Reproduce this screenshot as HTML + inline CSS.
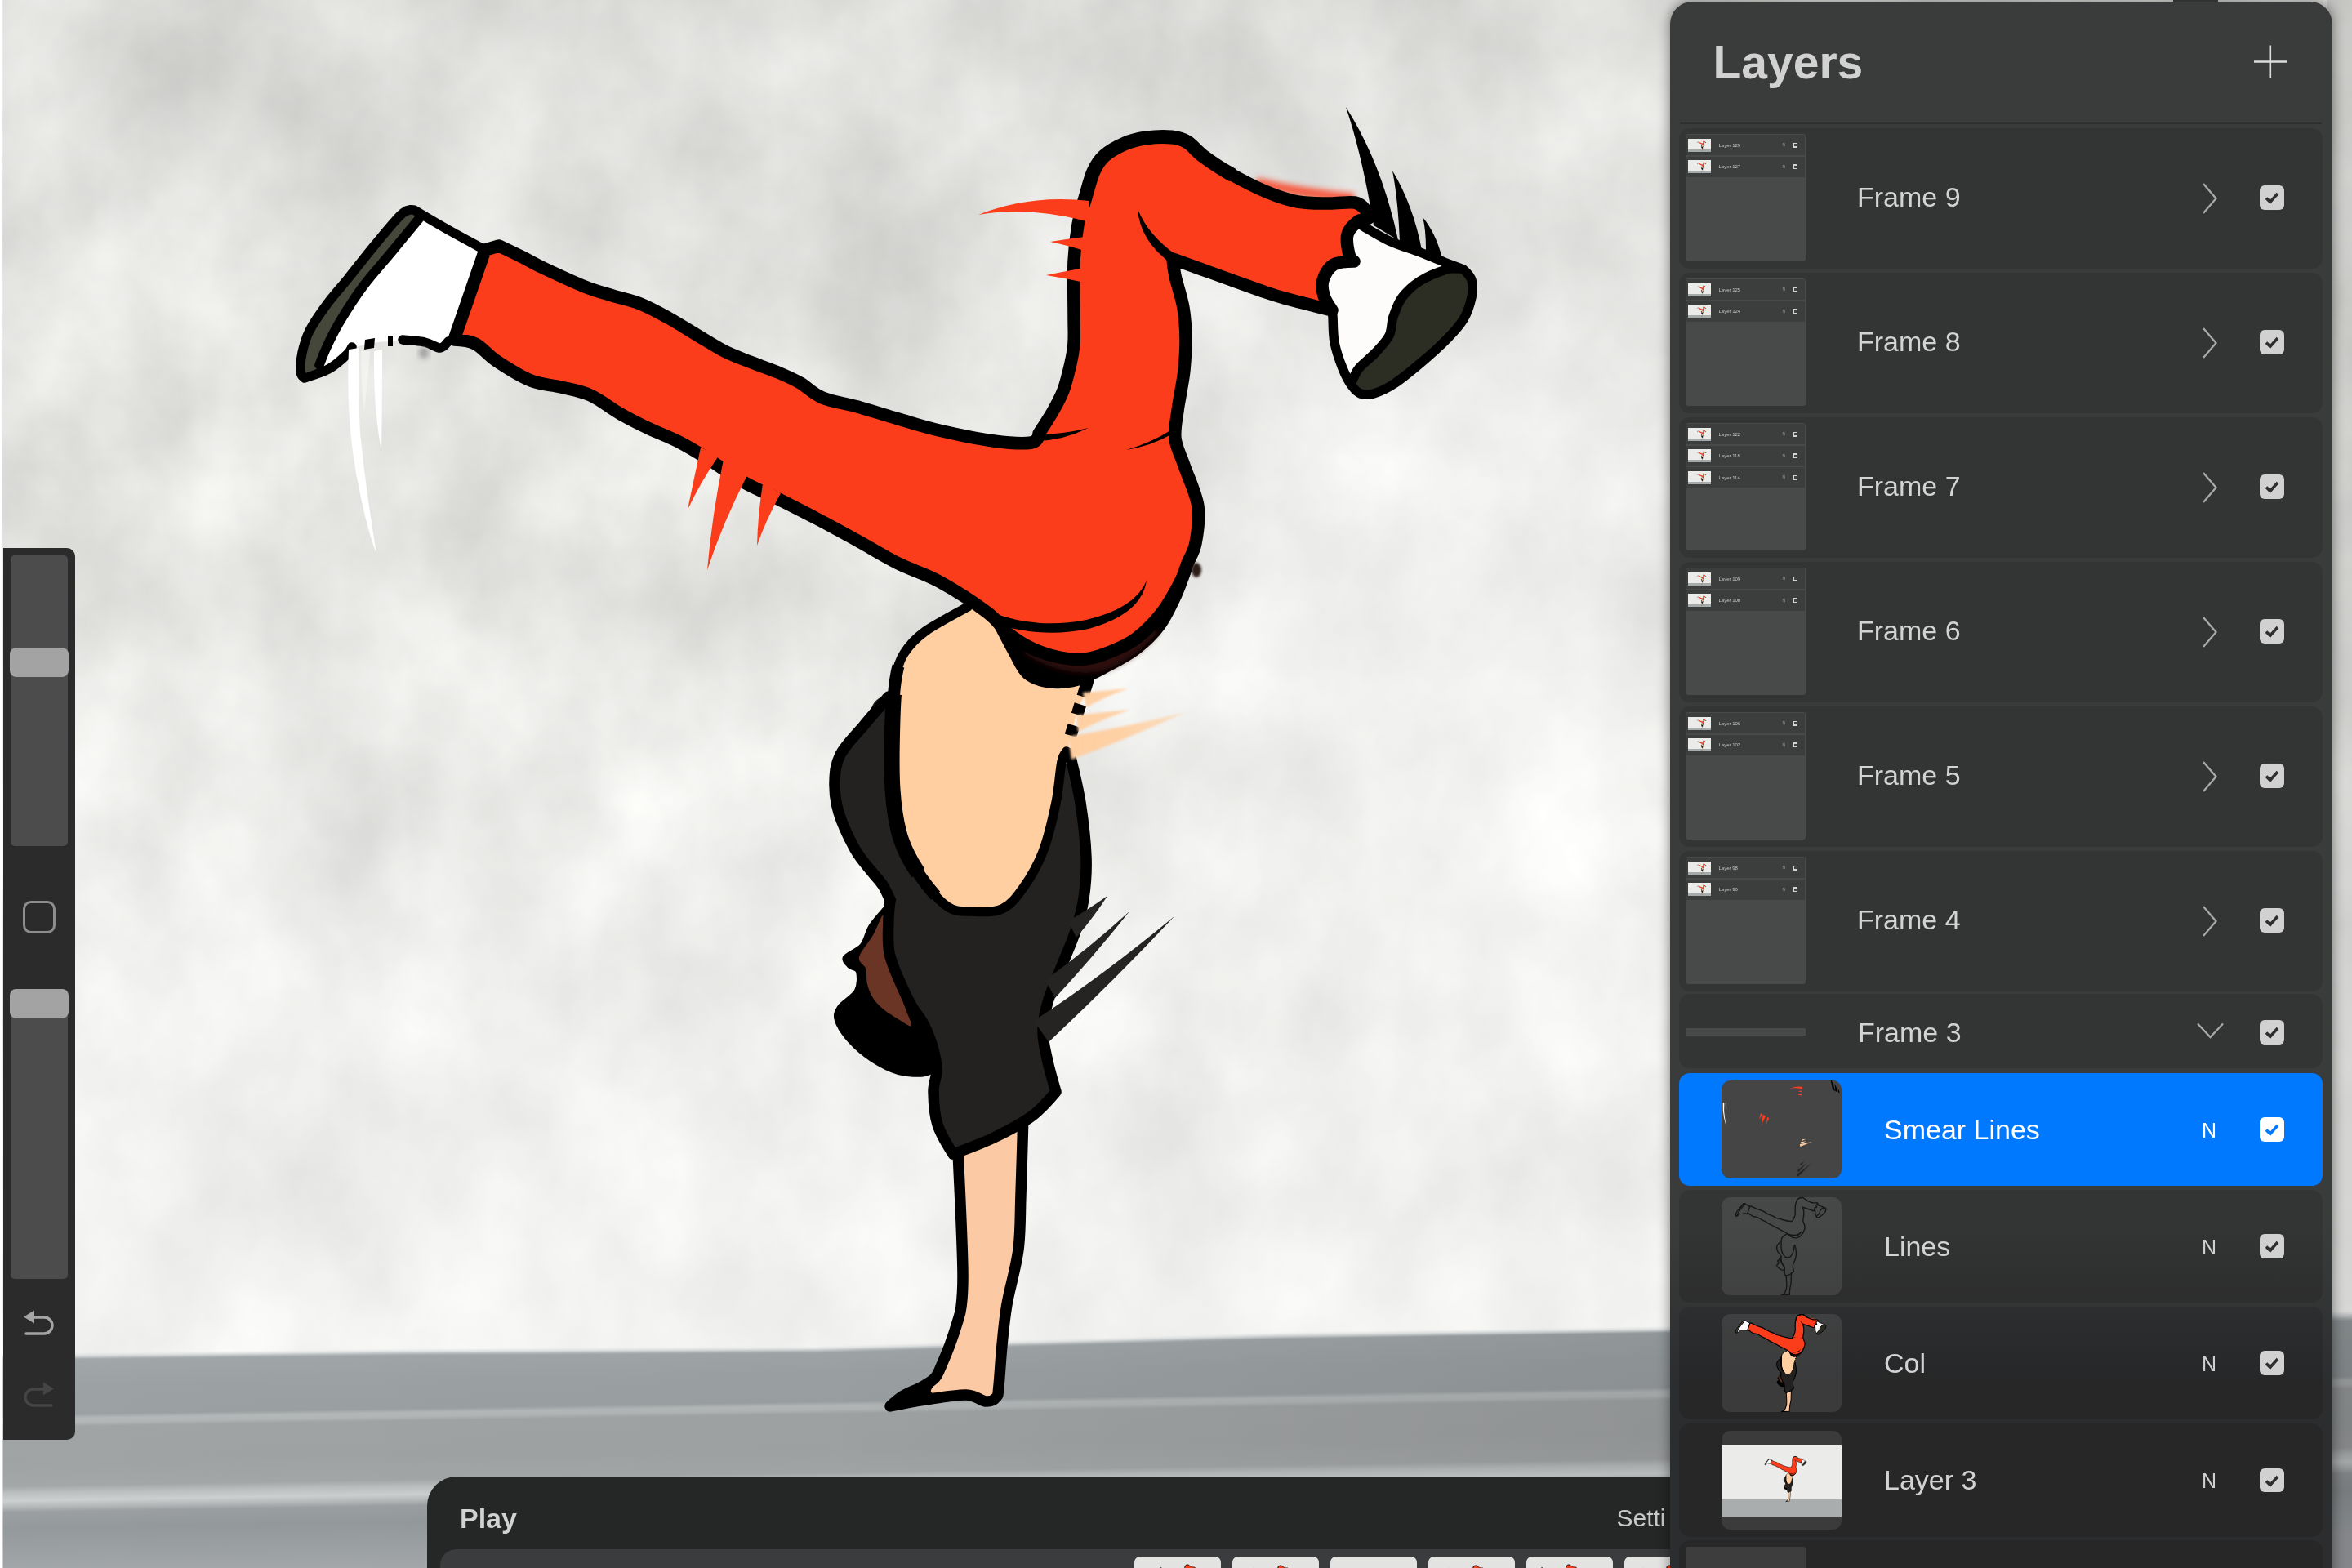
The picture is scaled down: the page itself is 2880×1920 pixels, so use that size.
<!DOCTYPE html><html><head><meta charset="utf-8"><title>Layers</title><style>
html,body{margin:0;padding:0;background:#fff}
body{width:2880px;height:1920px;overflow:hidden;position:relative;font-family:"Liberation Sans",sans-serif}
.abs{position:absolute}
svg{position:absolute;left:0;top:0;overflow:visible}
#side{left:3.5px;top:671px;width:88px;height:1092px;background:#2b2b2b;border-radius:0 10px 10px 0}
.trk{left:9px;width:70px;background:#4d4c4c;border-radius:5px}
.hnd{left:8px;width:72px;height:36px;background:#a3a3a3;border-radius:8px}
#tl{will-change:transform;left:523px;top:1808px;width:1560px;height:140px;background:#252727;border-radius:36px 0 0 0;overflow:hidden}
#tl .play{left:40px;top:31px;font-size:34px;font-weight:bold;color:#d2d2d2;line-height:40px}
#tl .set{left:1456.5px;top:33px;font-size:30px;color:#c9c9c9;line-height:36px;white-space:nowrap}
#tl .strip{left:16px;top:88.5px;width:1600px;height:80px;background:#3b3c3e;border-radius:20px 0 0 0}
#tl .ft{top:98px;width:105.5px;height:60px;background:#e3e3e2;border-radius:7px 7px 0 0;overflow:hidden}
#lay{left:2044.5px;top:1.5px;width:810.5px;height:1960px;background:linear-gradient(#3a3b3b 0,#3a3b3b 1500px,#2c2d2e 1690px);border-radius:27px;box-shadow:0 0 14px 2px rgba(0,0,0,.38);will-change:transform}
#lay .ttl{left:52.5px;top:42px;font-size:57px;font-weight:bold;color:#d1d1d1;line-height:64px}
.row{left:11px;width:787.5px;background:rgba(0,0,0,.115);border-radius:13px}
.row.sel{background:#0079ff}
.gth{left:7.5px;top:7.5px;width:147.5px;height:155.5px;background:rgba(255,255,255,.105);overflow:hidden;border-radius:3px}
.mr{left:1px;width:145.5px;height:25px;background:rgba(0,0,0,.16)}
.mt{left:2.5px;top:4.5px;width:27.5px;height:13px;background:#ebebea;border-bottom:3.5px solid #a5aaab}
.ml{left:40px;top:8.5px;font-size:6px;line-height:8px;color:#c4c4c4;white-space:nowrap}
.mn{left:118px;top:9px;font-size:5px;line-height:7px;color:#9a9a9a}
.mc{left:130.5px;top:9.5px;width:6px;height:6px;background:#d4d4d4;border-radius:1px}
.mc:after{content:"";position:absolute;left:1.5px;top:1.5px;width:3px;height:3px;background:#444}
.nm{font-size:34px;line-height:40px;color:#d3d3d3;white-space:nowrap}
.row.sel .nm{color:#fff}
.cb{left:711px;width:29.5px;height:29.5px;background:#d1d1d1;border-radius:6px}
.row.sel .cb{background:#fff}
.row.sel .th{background:#454545}
.th{left:52px;top:9px;width:147px;height:120.5px;background:rgba(255,255,255,.095);border-radius:11px;overflow:hidden}
.n{left:640px;font-size:25px;line-height:30px;color:#d0d0d0}
.row.sel .n{color:#fff}
</style></head><body>
<svg width="2880" height="1920" viewBox="0 0 2880 1920">
<defs>
<filter id="wallTex" x="0" y="0" width="100%" height="100%" filterUnits="objectBoundingBox" color-interpolation-filters="sRGB">
<feTurbulence type="fractalNoise" baseFrequency="0.006 0.0045" numOctaves="5" seed="11" result="n"/>
<feColorMatrix type="matrix" values="0.2 0 0 0 0.815  0.2 0 0 0 0.815  0.2 0 0 0 0.805  0 0 0 0 1"/>
</filter>
<filter id="soft" x="-20%" y="-20%" width="140%" height="140%"><feGaussianBlur stdDeviation="1.6"/></filter>
<filter id="soft2" x="-20%" y="-50%" width="140%" height="200%"><feGaussianBlur stdDeviation="3.5"/></filter>
<filter id="soft3" filterUnits="userSpaceOnUse" x="1500" y="190" width="200" height="80"><feGaussianBlur stdDeviation="3.5"/></filter>
<linearGradient id="skinFade" gradientUnits="userSpaceOnUse" x1="1310" y1="0" x2="1450" y2="0"><stop offset="0" stop-color="#ffcfa1"/><stop offset="0.45" stop-color="#ffcfa1" stop-opacity=".95"/><stop offset="1" stop-color="#ffcfa1" stop-opacity=".55"/></linearGradient>
<linearGradient id="floorG" gradientUnits="userSpaceOnUse" x1="0" y1="1650" x2="0" y2="1950" gradientTransform="skewY(-0.95)"><stop offset="0.0133" stop-color="#eceeed"/><stop offset="0.0333" stop-color="#cfd3d3"/><stop offset="0.0500" stop-color="#a1a7a9"/><stop offset="0.1667" stop-color="#9ca2a4"/><stop offset="0.2767" stop-color="#9ba0a2"/><stop offset="0.2933" stop-color="#b4b8b9"/><stop offset="0.3100" stop-color="#b2b6b7"/><stop offset="0.3267" stop-color="#a1a4a5"/><stop offset="0.4667" stop-color="#a0a3a4"/><stop offset="0.5667" stop-color="#a4a7a8"/><stop offset="0.5933" stop-color="#bbbebe"/><stop offset="0.6267" stop-color="#cdd0d0"/><stop offset="0.6533" stop-color="#b4b7b8"/><stop offset="0.6733" stop-color="#9b9fa1"/><stop offset="0.7400" stop-color="#94999b"/><stop offset="0.9167" stop-color="#a3a7aa"/></linearGradient><linearGradient id="floorD" gradientUnits="userSpaceOnUse" x1="0" y1="0" x2="2880" y2="0"><stop offset="0" stop-color="#000" stop-opacity="0"/><stop offset="0.35" stop-color="#000" stop-opacity="0.02"/><stop offset="0.7" stop-color="#000" stop-opacity="0.1"/><stop offset="1" stop-color="#000" stop-opacity="0.1"/></linearGradient><linearGradient id="wallV" gradientUnits="userSpaceOnUse" x1="0" y1="0" x2="0" y2="1660"><stop offset="0" stop-color="#000" stop-opacity="0.06"/><stop offset="0.2" stop-color="#000" stop-opacity="0.04"/><stop offset="0.36" stop-color="#000" stop-opacity="0"/><stop offset="0.5" stop-color="#fff" stop-opacity="0.12"/><stop offset="1" stop-color="#fff" stop-opacity="0.45"/></linearGradient><radialGradient id="wallR" gradientUnits="userSpaceOnUse" cx="1780" cy="700" r="700"><stop offset="0" stop-color="#fff" stop-opacity="0.4"/><stop offset="1" stop-color="#fff" stop-opacity="0"/></radialGradient>
<path id="pPants" d="M611,301C611,301 631,310.5 640,315C649,319.5 652.3,322 665,328C677.7,334 701.8,345.3 716,351C730.2,356.7 738.7,358.5 750,362C761.3,365.5 772.7,367.5 784,372C795.3,376.5 806.5,382.7 818,389C829.5,395.3 841.5,403.2 853,410C864.5,416.8 875.7,424.3 887,430C898.3,435.7 909.7,439.5 921,444C932.3,448.5 945.2,452.8 955,457C964.8,461.2 971.3,464 980,469C988.7,474 995.3,482.2 1007,487C1018.7,491.8 1034.5,493.7 1050,498C1065.5,502.3 1083.3,508.2 1100,513C1116.7,517.8 1130.5,522.5 1150,527C1169.5,531.5 1198.2,537.5 1217,540C1235.8,542.5 1253.8,543.5 1263,542C1272.2,540.5 1272,531 1272,531C1272,531 1284,512.8 1289,504C1294,495.2 1298.3,487.8 1302,478C1305.7,468.2 1308.8,454.7 1311,445C1313.2,435.3 1314.3,429.7 1315,420C1315.7,410.3 1315,403.7 1315,387C1315,370.3 1314.2,338.7 1315,320C1315.8,301.3 1317.7,288 1320,275C1322.3,262 1325.8,252.8 1329,242C1332.2,231.2 1335.2,218.5 1339,210C1342.8,201.5 1345.7,196.7 1352,191C1358.3,185.3 1368.5,179.7 1377,176C1385.5,172.3 1393.3,170.3 1403,169C1412.7,167.7 1426.5,167.2 1435,168C1443.5,168.8 1447.7,170.2 1454,174C1460.3,177.8 1464.5,184.7 1473,191C1481.5,197.3 1492,204.7 1505,212C1518,219.3 1537,229.2 1551,235C1565,240.8 1576.3,244.7 1589,247C1601.7,249.3 1615.3,248.8 1627,249C1638.7,249.2 1651.5,246.7 1659,248C1666.5,249.3 1669.2,253.8 1672,257C1674.8,260.2 1677.5,264.7 1676,267C1674.5,269.3 1667.3,267.7 1663,271C1658.7,274.3 1651.8,280.2 1650,287C1648.2,293.8 1650.7,306.5 1652,312C1653.3,317.5 1658,320 1658,320C1658,320 1639.3,320.2 1633,324C1626.7,327.8 1622,336.7 1620,343C1618,349.3 1619.2,355.8 1621,362C1622.8,368.2 1631,380 1631,380C1631,380 1593.5,370.7 1580,367C1566.5,363.3 1566.2,363.5 1550,358C1533.8,352.5 1502,340.8 1483,334C1464,327.2 1436,317 1436,317C1436,317 1436.8,328 1439,338C1441.2,348 1446.8,364.2 1449,377C1451.2,389.8 1451.8,402.3 1452,415C1452.2,427.7 1451,442.3 1450,453C1449,463.7 1447.3,470.7 1446,479C1444.7,487.3 1443.2,493.3 1442,503C1440.8,512.7 1437.7,525.8 1439,537C1440.3,548.2 1445.3,556.2 1450,570C1454.7,583.8 1464.7,604.2 1467,620C1469.3,635.8 1466.2,653.3 1464,665C1461.8,676.7 1457.2,682 1454,690C1450.8,698 1450.3,702.8 1445,713C1439.7,723.2 1431,739.5 1422,751C1413,762.5 1401.3,774.2 1391,782C1380.7,789.8 1370.3,793.8 1360,798C1349.7,802.2 1339.3,805.8 1329,807C1318.7,808.2 1308.5,807 1298,805C1287.5,803 1276.5,799.8 1266,795C1255.5,790.2 1244.5,783.5 1235,776C1225.5,768.5 1223.2,760.7 1209,750C1194.8,739.3 1168.2,722 1150,712C1131.8,702 1116.7,698.3 1100,690C1083.3,681.7 1066.7,671.2 1050,662C1033.3,652.8 1016.2,643.5 1000,635C983.8,626.5 968,618.5 953,611C938,603.5 924.3,598.2 910,590C895.7,581.8 879.8,570 867,562C854.2,554 845.3,548.3 833,542C820.7,535.7 805.2,529.8 793,524C780.8,518.2 771.7,513.7 760,507C748.3,500.3 735.2,489.5 723,484C710.8,478.5 699.2,477 687,474C674.8,471 663.2,471.3 650,466C636.8,460.7 619.3,449.5 608,442C596.7,434.5 590.7,425.3 582,421C573.3,416.7 556,416 556,416C556,416 594,306 594,306C594,306 611,301 611,301Z"/>
<path id="pBand" d="M1464,680C1463.2,682.5 1462.2,686.3 1459,695C1455.8,703.7 1450.7,719.7 1445,732C1439.3,744.3 1433.3,757.8 1425,769C1416.7,780.2 1406.2,790.3 1395,799C1383.8,807.7 1370.3,814.5 1358,821C1345.7,827.5 1333.3,834.7 1321,838C1308.7,841.3 1295.2,842.5 1284,841C1272.8,839.5 1262,835.8 1254,829C1246,822.2 1242.5,811.5 1236,800C1229.5,788.5 1218.5,766.7 1215,760L1239,772C1244,775 1259,785.3 1269,790C1279,794.7 1289,798 1299,800C1309,802 1319.2,803.2 1329,802C1338.8,800.8 1348.2,797.2 1358,793C1367.8,788.8 1378,784.7 1388,777C1398,769.3 1409.3,758.2 1418,747C1426.7,735.8 1434.8,721.2 1440,710C1445.2,698.8 1447.5,685 1449,680Z"/>
<path id="pLsW" d="M513,268L548,281L592,305L554,409L549,418L539,426L520,419L493,416L453,420L429,427L404,451L391,447L400,425L416,394L445,350L480,308Z"/>
<path id="pLsS" d="M507,258C503.5,257 500,255 492,262C484,269 469.8,287 459,300C448.2,313 436.8,327.8 427,340C417.2,352.2 408,362.2 400,373C392,383.8 384,395.2 379,405C374,414.8 371.7,423.7 370,432C368.3,440.3 368.5,450 369,455C369.5,460 370.3,461.5 373,462C375.7,462.5 381.7,461 385,458C388.3,455 390.5,449.5 393,444C395.5,438.5 396.2,433.3 400,425C403.8,416.7 408.5,406.5 416,394C423.5,381.5 434.3,364.3 445,350C455.7,335.7 468.7,321.7 480,308C491.3,294.3 508.5,276.3 513,268C517.5,259.7 510.5,259 507,258Z"/>
<path id="pLsO" d="M592,305C584.7,301 562.2,289 548,281C533.8,273 507,257 507,257C507,257 500,254.8 492,262C484,269.2 469.8,287 459,300C448.2,313 436.8,327.8 427,340C417.2,352.2 408,362.2 400,373C392,383.8 384,395.2 379,405C374,414.8 371.8,423.7 370,432C368.2,440.3 367.5,449.8 368,455C368.5,460.2 373,463 373,463C373,463 376.8,462 382,460C387.2,458 396.8,455.3 404,451C411.2,446.7 420.5,438.3 425,434C429.5,429.7 430,426.5 431,425"/>
<path id="pLsI" d="M513,268C507.5,274.7 491.3,294.3 480,308C468.7,321.7 455.7,335.7 445,350C434.3,364.3 423.5,381.5 416,394C408.5,406.5 404.2,416.2 400,425C395.8,433.8 392.5,443.3 391,447"/>
<path id="pLsB" d="M493,416C497.5,416.5 512.3,417.3 520,419C527.7,420.7 534.2,426.2 539,426C543.8,425.8 547.3,419.3 549,418"/>
<path id="pRsW" d="M1663,270C1666.2,268.3 1662.7,272.8 1669,277C1675.3,281.2 1689.3,289.7 1701,295C1712.7,300.3 1727.3,304.5 1739,309C1750.7,313.5 1762.2,318.5 1771,322C1779.8,325.5 1792,328.7 1792,330C1792,331.3 1779.8,327.7 1771,330C1762.2,332.3 1748,338.3 1739,344C1730,349.7 1722.5,356.7 1717,364C1711.5,371.3 1708.7,380.2 1706,388C1703.3,395.8 1704.7,403.7 1701,411C1697.3,418.3 1690.2,425.3 1684,432C1677.8,438.7 1668.7,445.3 1664,451C1659.3,456.7 1657.5,462.5 1656,466C1654.5,469.5 1657,474.5 1655,472C1653,469.5 1647.5,459.8 1644,451C1640.5,442.2 1636,429.5 1634,419C1632,408.5 1632.5,394.8 1632,388C1631.5,381.2 1632.8,382.3 1631,378C1629.2,373.7 1622.8,367.8 1621,362C1619.2,356.2 1618,349.3 1620,343C1622,336.7 1626.7,327.8 1633,324C1639.3,320.2 1654.8,322 1658,320C1661.2,318 1653.3,317.5 1652,312C1650.7,306.5 1648.2,294 1650,287C1651.8,280 1659.8,271.7 1663,270Z"/>
<path id="pRsS" d="M1792,330C1797.2,332.2 1800.3,337.3 1802,343C1803.7,348.7 1803.7,356 1802,364C1800.3,372 1797.2,382.3 1792,391C1786.8,399.7 1779.8,407 1771,416C1762.2,425 1749.7,436 1739,445C1728.3,454 1716.5,463.8 1707,470C1697.5,476.2 1688.8,480 1682,482C1675.2,484 1670.5,483.7 1666,482C1661.5,480.3 1656.7,474.7 1655,472C1653.3,469.3 1654.5,469.5 1656,466C1657.5,462.5 1659.3,456.7 1664,451C1668.7,445.3 1677.8,438.7 1684,432C1690.2,425.3 1697.3,418.3 1701,411C1704.7,403.7 1703.3,395.8 1706,388C1708.7,380.2 1711.5,371.3 1717,364C1722.5,356.7 1730,349.7 1739,344C1748,338.3 1762.2,332.3 1771,330C1779.8,327.7 1786.8,327.8 1792,330Z"/>
<path id="pRsO" d="M1669,277C1674.3,280 1689.3,289.7 1701,295C1712.7,300.3 1727.3,304.5 1739,309C1750.7,313.5 1762.2,318.5 1771,322C1779.8,325.5 1792,330 1792,330C1792,330 1800.3,337.3 1802,343C1803.7,348.7 1803.7,356 1802,364C1800.3,372 1797.2,382.3 1792,391C1786.8,399.7 1779.8,407 1771,416C1762.2,425 1749.7,436 1739,445C1728.3,454 1716.5,463.8 1707,470C1697.5,476.2 1688.8,480 1682,482C1675.2,484 1670.5,483.7 1666,482C1661.5,480.3 1658.7,477.2 1655,472C1651.3,466.8 1647.5,459.8 1644,451C1640.5,442.2 1636,429.5 1634,419C1632,408.5 1632.5,394.8 1632,388C1631.5,381.2 1631.2,379.7 1631,378"/>
<path id="pRsI" d="M1785,329C1782.7,329.2 1778.7,327.5 1771,330C1763.3,332.5 1748,338.3 1739,344C1730,349.7 1722.5,356.7 1717,364C1711.5,371.3 1708.7,380.2 1706,388C1703.3,395.8 1704.7,403.7 1701,411C1697.3,418.3 1690.2,425.3 1684,432C1677.8,438.7 1668.7,445.3 1664,451C1659.3,456.7 1657.3,463.5 1656,466"/>
<path id="pShirt" d="M1088,853C1064.3,851 1067.8,876.2 1058,888C1048.2,899.8 1035,912.3 1029,924C1023,935.7 1022.3,946.2 1022,958C1021.7,969.8 1022.8,981.3 1027,995C1031.2,1008.7 1040.2,1027.8 1047,1040C1053.8,1052.2 1062.3,1060.7 1068,1068C1073.7,1075.3 1077.3,1078.3 1081,1084C1084.7,1089.7 1089,1088.2 1090,1102C1091,1115.8 1084.7,1149.5 1087,1167C1089.3,1184.5 1099,1196 1104,1207C1109,1218 1112.5,1225.2 1117,1233C1121.5,1240.8 1126.8,1245.8 1131,1254C1135.2,1262.2 1139.3,1272.7 1142,1282C1144.7,1291.3 1146.8,1300.8 1147,1310C1147.2,1319.2 1142.8,1325.8 1143,1337C1143.2,1348.2 1144,1364.3 1148,1377C1152,1389.7 1167,1413 1167,1413C1167,1413 1201,1400.7 1217,1393C1233,1385.3 1250.3,1376.3 1263,1367C1275.7,1357.7 1293,1337 1293,1337C1293,1337 1285.7,1312.3 1283,1300C1280.3,1287.7 1277,1275.2 1277,1263C1277,1250.8 1279.2,1240.3 1283,1227C1286.8,1213.7 1294.3,1197.5 1300,1183C1305.7,1168.5 1312.5,1153.8 1317,1140C1321.5,1126.2 1324.8,1115 1327,1100C1329.2,1085 1330.7,1069.5 1330,1050C1329.3,1030.5 1326.3,1004.2 1323,983C1319.7,961.8 1310,923 1310,923C1310,923 1318.3,938.8 1300,935C1281.7,931.2 1235.3,913.7 1200,900C1164.7,886.3 1111.7,855 1088,853Z"/>
<path id="pSkin" d="M1185,743C1173.8,747.7 1146,763.5 1133,773C1120,782.5 1113,790.5 1107,800C1101,809.5 1099.3,816.7 1097,830C1094.7,843.3 1093.7,857.2 1093,880C1092.3,902.8 1091.3,942.5 1093,967C1094.7,991.5 1097.3,1009.3 1103,1027C1108.7,1044.7 1117.5,1059.2 1127,1073C1136.5,1086.8 1149.5,1102.8 1160,1110C1170.5,1117.2 1178.8,1115.5 1190,1116C1201.2,1116.5 1216.5,1117.8 1227,1113C1237.5,1108.2 1244.7,1098.7 1253,1087C1261.3,1075.3 1270.3,1060.3 1277,1043C1283.7,1025.7 1289.2,1001.3 1293,983C1296.8,964.7 1297.7,943.8 1300,933C1302.3,922.2 1303.7,928.8 1307,918C1310.3,907.2 1315.3,881.8 1320,868C1324.7,854.2 1338.3,839.7 1335,835C1331.7,830.3 1313.5,841 1300,840C1286.5,839 1268.2,842.3 1254,829C1239.8,815.7 1224,774 1215,760C1206,746 1205,747.8 1200,745C1195,742.2 1196.2,738.3 1185,743Z"/>
<path id="pTorsoL" d="M1185,743C1176.3,748 1146,763.5 1133,773C1120,782.5 1113,790.5 1107,800C1101,809.5 1099.3,816.7 1097,830C1094.7,843.3 1093.7,857.2 1093,880C1092.3,902.8 1091.3,942.5 1093,967C1094.7,991.5 1097.3,1009.3 1103,1027C1108.7,1044.7 1117.5,1059.2 1127,1073C1136.5,1086.8 1149.5,1102.8 1160,1110C1170.5,1117.2 1178.8,1115.5 1190,1116C1201.2,1116.5 1216.5,1117.8 1227,1113C1237.5,1108.2 1244.7,1098.7 1253,1087C1261.3,1075.3 1270.3,1060.3 1277,1043C1283.7,1025.7 1289.2,1001.3 1293,983C1296.8,964.7 1297.8,943.5 1300,933C1302.2,922.5 1305,922.2 1306,920"/>
<path id="pShirtL" d="M1088,853C1083,858.8 1067.8,876.2 1058,888C1048.2,899.8 1035,912.3 1029,924C1023,935.7 1022.3,946.2 1022,958C1021.7,969.8 1022.8,981.3 1027,995C1031.2,1008.7 1040.2,1027.8 1047,1040C1053.8,1052.2 1062.3,1060.7 1068,1068C1073.7,1075.3 1077.3,1078.3 1081,1084C1084.7,1089.7 1088.5,1099 1090,1102"/>
<path id="pShirtR" d="M1310,923C1312.2,933 1319.7,961.8 1323,983C1326.3,1004.2 1329.3,1030.5 1330,1050C1330.7,1069.5 1329.2,1085 1327,1100C1324.8,1115 1321.5,1126.2 1317,1140C1312.5,1153.8 1305.7,1168.5 1300,1183C1294.3,1197.5 1286.8,1213.7 1283,1227C1279.2,1240.3 1277,1250.8 1277,1263C1277,1275.2 1280.3,1287.7 1283,1300C1285.7,1312.3 1293,1337 1293,1337C1293,1337 1275.7,1357.7 1263,1367C1250.3,1376.3 1233,1385.3 1217,1393C1201,1400.7 1167,1413 1167,1413C1167,1413 1152,1389.7 1148,1377C1144,1364.3 1143.2,1348.2 1143,1337C1142.8,1325.8 1147.2,1319.2 1147,1310C1146.8,1300.8 1144.7,1291.3 1142,1282C1139.3,1272.7 1135.2,1262.2 1131,1254C1126.8,1245.8 1121.5,1240.8 1117,1233C1112.5,1225.2 1108.7,1218 1104,1207C1099.3,1196 1091.7,1180.7 1089,1167C1086.3,1153.3 1087.8,1135.8 1088,1125C1088.2,1114.2 1089.7,1105.8 1090,1102"/>
<path id="pHead" d="M1088,1106C1085,1110.7 1071.5,1124.5 1066,1133C1060.5,1141.5 1060.3,1150.5 1055,1157C1049.7,1163.5 1036.5,1167.5 1034,1172C1031.5,1176.5 1037.3,1181 1040,1184C1042.7,1187 1048.7,1185.2 1050,1190C1051.3,1194.8 1051.8,1205.8 1048,1213C1044.2,1220.2 1031,1226.8 1027,1233C1023,1239.2 1021.8,1243 1024,1250C1026.2,1257 1032.8,1267 1040,1275C1047.2,1283 1057,1291.5 1067,1298C1077,1304.5 1089,1311 1100,1314C1111,1317 1125.3,1317.5 1133,1316C1140.7,1314.5 1144.5,1310.7 1146,1305C1147.5,1299.3 1144.5,1290.5 1142,1282C1139.5,1273.5 1135.2,1262.2 1131,1254C1126.8,1245.8 1121.5,1240.8 1117,1233C1112.5,1225.2 1109,1218 1104,1207C1099,1196 1090.3,1184 1087,1167C1083.7,1150 1083.8,1115.2 1084,1105C1084.2,1094.8 1091,1101.3 1088,1106Z"/>
<path id="pFace" d="M1080,1122C1077.7,1125.3 1073.7,1136.7 1069,1145C1064.3,1153.3 1053.5,1165.2 1052,1172C1050.5,1178.8 1058.3,1180.5 1060,1186C1061.7,1191.5 1060.5,1199 1062,1205C1063.5,1211 1065.7,1216.8 1069,1222C1072.3,1227.2 1076.8,1231.7 1082,1236C1087.2,1240.3 1094.3,1244.7 1100,1248C1105.7,1251.3 1114.7,1258.5 1116,1256C1117.3,1253.5 1111.8,1244 1108,1233C1104.2,1222 1096.7,1203.8 1093,1190C1089.3,1176.2 1087.7,1160.8 1086,1150C1084.3,1139.2 1084,1129.7 1083,1125C1082,1120.3 1082.3,1118.7 1080,1122Z"/>
<path id="pArm" d="M1173,1410C1173.7,1424.5 1176,1471.5 1177,1497C1178,1522.5 1179,1545.8 1179,1563C1179,1580.2 1178.2,1590.5 1177,1600C1175.8,1609.5 1174.3,1612.2 1172,1620C1169.7,1627.8 1166,1638.8 1163,1647C1160,1655.2 1157,1662.3 1154,1669C1151,1675.7 1149.2,1682.2 1145,1687C1140.8,1691.8 1135.5,1694.3 1129,1698C1122.5,1701.7 1112.5,1705 1106,1709C1099.5,1713 1090,1722 1090,1722C1090,1722 1117.5,1716.3 1133,1714C1148.5,1711.7 1170.7,1707.7 1183,1708C1195.3,1708.3 1200.8,1715.5 1207,1716C1213.2,1716.5 1217.3,1714.2 1220,1711C1222.7,1707.8 1221.8,1707.7 1223,1697C1224.2,1686.3 1225.3,1663.7 1227,1647C1228.7,1630.3 1229.7,1616.5 1233,1597C1236.3,1577.5 1244.2,1552.3 1247,1530C1249.8,1507.7 1249,1490.5 1250,1463C1251,1435.5 1252.5,1381.3 1253,1365"/>
<path id="pArmF" d="M1173,1405C1160.3,1427.8 1176,1470.7 1177,1497C1178,1523.3 1179,1545.8 1179,1563C1179,1580.2 1178.2,1590.5 1177,1600C1175.8,1609.5 1174.3,1612.2 1172,1620C1169.7,1627.8 1166,1638.8 1163,1647C1160,1655.2 1157,1662.3 1154,1669C1151,1675.7 1147.7,1681.2 1145,1687C1142.3,1692.8 1137.2,1700.8 1138,1704C1138.8,1707.2 1142.5,1706 1150,1706C1157.5,1706 1173.5,1703 1183,1704C1192.5,1705 1200.8,1711.3 1207,1712C1213.2,1712.7 1217.3,1710.5 1220,1708C1222.7,1705.5 1221.8,1707.2 1223,1697C1224.2,1686.8 1225.3,1663.7 1227,1647C1228.7,1630.3 1229.7,1616.5 1233,1597C1236.3,1577.5 1244.2,1552.3 1247,1530C1249.8,1507.7 1249,1491.3 1250,1463C1251,1434.7 1265.8,1369.7 1253,1360C1240.2,1350.3 1185.7,1382.2 1173,1405Z"/>
<path id="pHand" d="M1145,1690C1139.3,1690.8 1115.2,1703.7 1106,1709C1096.8,1714.3 1086.2,1720.3 1090,1722C1093.8,1723.7 1118.7,1720.5 1129,1719C1139.3,1717.5 1150.2,1715.5 1152,1713C1153.8,1710.5 1141.2,1707.8 1140,1704C1138.8,1700.2 1150.7,1689.2 1145,1690Z"/>
<path id="pCr1" d="M1268,540Q1300,540 1333,524Q1300,532 1272,532Z"/>
<path id="pCr2" d="M1379,551Q1410,542 1435,526L1436,531Q1410,546 1379,551Z"/>
<path id="pKnee" d="M1393,256Q1406,288 1440,312L1436,324Q1396,296 1393,256Z"/>
<path id="pKneeO" d="M1311,445C1311.7,440.8 1314.3,429.7 1315,420C1315.7,410.3 1315,403.7 1315,387C1315,370.3 1314.2,338.7 1315,320C1315.8,301.3 1317.7,288 1320,275C1322.3,262 1325.8,252.8 1329,242C1332.2,231.2 1335.2,218.5 1339,210C1342.8,201.5 1345.7,196.7 1352,191C1358.3,185.3 1368.5,179.7 1377,176C1385.5,172.3 1393.3,170.3 1403,169C1412.7,167.7 1426.5,167.2 1435,168C1443.5,168.8 1447.7,170.2 1454,174C1460.3,177.8 1464.5,184.7 1473,191C1481.5,197.3 1492,204.7 1505,212C1518,219.3 1537,229.2 1551,235C1565,240.8 1576.3,244.7 1589,247C1601.7,249.3 1620.7,248.7 1627,249"/>
<path id="pButt" d="M1404,711Q1390,745 1330,759Q1270,771 1215,750L1208,760Q1270,783 1333,770Q1398,752 1404,711Z"/>
<g id="figLines"><use href="#pArm" fill="none" stroke="#161616" stroke-width="18" stroke-linejoin="round" stroke-linecap="round"/>
<use href="#pHead" fill="none" stroke="#161616" stroke-width="18" stroke-linejoin="round" stroke-linecap="round"/>
<use href="#pShirtL" fill="none" stroke="#161616" stroke-width="18" stroke-linejoin="round" stroke-linecap="round"/>
<use href="#pShirtR" fill="none" stroke="#161616" stroke-width="18" stroke-linejoin="round" stroke-linecap="round"/>
<use href="#pTorsoL" fill="none" stroke="#161616" stroke-width="18" stroke-linejoin="round" stroke-linecap="round"/>
<use href="#pLsO" fill="none" stroke="#161616" stroke-width="18" stroke-linejoin="round" stroke-linecap="round"/>
<use href="#pLsI" fill="none" stroke="#161616" stroke-width="18" stroke-linejoin="round" stroke-linecap="round"/>
<use href="#pLsB" fill="none" stroke="#161616" stroke-width="18" stroke-linejoin="round" stroke-linecap="round"/>
<use href="#pRsO" fill="none" stroke="#161616" stroke-width="18" stroke-linejoin="round" stroke-linecap="round"/>
<use href="#pRsI" fill="none" stroke="#161616" stroke-width="18" stroke-linejoin="round" stroke-linecap="round"/>
<use href="#pPants" fill="none" stroke="#161616" stroke-width="18" stroke-linejoin="round" stroke-linecap="round"/>
<use href="#pButt" fill="none" stroke="#161616" stroke-width="18" stroke-linejoin="round" stroke-linecap="round"/></g>
</defs>
<rect x="3.5" y="0" width="2877" height="1920" fill="#e8e8e5"/>
<rect x="3.5" y="0" width="2877" height="1700" filter="url(#wallTex)"/>
<rect x="3.5" y="0" width="2877" height="1700" fill="url(#wallV)"/>
<rect x="1000" y="0" width="1100" height="1500" fill="url(#wallR)"/>
<path d="M3.5,1661.5L500,1655.5L1000,1652.5L1180,1647L1560,1635.5L2040,1628L2880,1609L2880,1920L3.5,1920Z" fill="url(#floorG)"/>
<path d="M3.5,1661.5L500,1655.5L1000,1652.5L1180,1647L1560,1635.5L2040,1628L2880,1609L2880,1920L3.5,1920Z" fill="url(#floorD)"/>
<path d="M3.5,1661.5L500,1655.5L1000,1652.5L1180,1647L1560,1635.5L2040,1628L2880,1609" fill="none" stroke="#d3d7d7" stroke-width="3.5" filter="url(#soft)"/>
<rect x="2850" y="0" width="30" height="1920" fill="#000" opacity=".1"/>
<g id="fig"><use href="#pArmF" fill="#fbc9a3"/>
<use href="#pHand" fill="#000"/>
<use href="#pArm" fill="none" stroke="#000" stroke-width="13.5" stroke-linejoin="round" stroke-linecap="round"/>
<use href="#pHead" fill="#000" stroke="#000" stroke-width="4" stroke-linejoin="round"/>
<use href="#pFace" fill="#6b3525"/>
<use href="#pShirt" fill="#232221"/>
<use href="#pSkin" fill="#ffcfa1"/>
<use href="#pShirtL" fill="none" stroke="#000" stroke-width="13.5" stroke-linejoin="round" stroke-linecap="round"/>
<use href="#pShirtR" fill="none" stroke="#000" stroke-width="13.5" stroke-linejoin="round" stroke-linecap="round"/>
<use href="#pTorsoL" fill="none" stroke="#000" stroke-width="11.5" stroke-linejoin="round" stroke-linecap="round"/>
<use href="#pTorsoL" fill="none" stroke="#000" stroke-width="15" stroke-dasharray="0 115 295 9999"/>
<use href="#pTorsoL" fill="none" stroke="#000" stroke-width="19" stroke-dasharray="0 150 225 9999"/>
<use href="#pBand" fill="#000" stroke="#000" stroke-width="3"/>
<path d="M1255,800Q1300,830 1350,822Q1390,808 1420,772L1400,770Q1330,800 1255,780Z" fill="#2e0e08" filter="url(#soft2)"/>
<use href="#pLsW" fill="#fff"/>
<use href="#pLsS" fill="#45473a"/>
<use href="#pRsW" fill="#fdfcfa"/>
<use href="#pRsS" fill="#2c2e23"/>
<use href="#pLsO" fill="none" stroke="#000" stroke-width="11.5" stroke-linejoin="round" stroke-linecap="round"/>
<use href="#pLsI" fill="none" stroke="#000" stroke-width="11.5" stroke-linejoin="round" stroke-linecap="round"/>
<use href="#pLsB" fill="none" stroke="#000" stroke-width="11.5" stroke-linejoin="round" stroke-linecap="round"/>
<use href="#pRsO" fill="none" stroke="#000" stroke-width="11.5" stroke-linejoin="round" stroke-linecap="round"/>
<use href="#pRsI" fill="none" stroke="#000" stroke-width="11.5" stroke-linejoin="round" stroke-linecap="round"/>
<path d="M1538,224Q1600,238 1658,243" stroke="#fc3d1b" stroke-width="13" fill="none" opacity=".8" filter="url(#soft3)"/>
<use href="#pPants" fill="#fc3d1b" stroke="#000" stroke-width="15.5" stroke-linejoin="round" stroke-linecap="round"/>
<use href="#pKneeO" fill="none" stroke="#000" stroke-width="17" stroke-dasharray="0 190 250 9999"/>
<use href="#pCr1" fill="#000"/>
<use href="#pCr2" fill="#000"/>
<use href="#pKnee" fill="#000"/>
<use href="#pButt" fill="#000"/>
<ellipse cx="1465" cy="698" rx="6" ry="9" fill="#2a1a12" filter="url(#soft)"/>
<path d="M1333,830L1304,923" stroke="#000" stroke-width="15" fill="none" stroke-dasharray="24 10 13 14 13 40"/>
<path d="M447,416L459,414L458,426L446,428Z M475,411L481,411L481,424L475,424Z" fill="#000"/>
<ellipse cx="519" cy="432" rx="6" ry="7" fill="#555" opacity=".5" filter="url(#soft2)"/></g>
<g id="smears"><path fill="#ffffff" d="M427,428Q423,520 440,600Q450,650 461,678Q448,600 441,530Q438,470 440,426Z"/>
<path fill="#ffffff" d="M458,430Q457,500 467,552Q468,490 468,428Z"/>
<path fill="#ffffff" opacity=".4" d="M442,430Q442,470 446,505Q450,470 453,430Z"/>
<path fill="#fc3d1b" d="M858,548L880,558Q858,590 842,624Q850,585 858,548Z"/>
<path fill="#fc3d1b" d="M886,562L916,580Q885,640 866,698Q872,630 886,562Z"/>
<path fill="#fc3d1b" d="M934,592L956,604Q938,636 927,668Q928,630 934,592Z"/>
<path fill="#fc3d1b" d="M1334,246Q1260,238 1198,263Q1260,252 1334,272Z"/>
<path fill="#fc3d1b" d="M1328,290L1328,307Q1305,300 1286,296Q1305,293 1328,290Z"/>
<path fill="#fc3d1b" d="M1328,328L1328,346Q1300,340 1281,337Q1300,333 1328,328Z"/>
<path fill="#000" d="M1682,276Q1668,190 1648,131Q1692,200 1712,294Z"/>
<path fill="#000" d="M1714,296Q1712,245 1705,209Q1730,250 1741,306Z"/>
<path fill="#000" d="M1746,306Q1746,280 1742,266Q1758,285 1766,316Z"/>
<g filter="url(#soft)"><path fill="url(#skinFade)" d="M1326,848L1330,866Q1355,852 1382,843Q1352,846 1326,848Z"/><path fill="url(#skinFade)" d="M1318,876L1320,896Q1350,880 1384,869Q1350,872 1318,876Z"/><path fill="url(#skinFade)" d="M1308,902L1312,930Q1380,905 1452,872Q1380,890 1308,902Z"/></g>
<path fill="#252423" d="M1308,1128Q1335,1112 1356,1097Q1340,1122 1318,1148Z"/>
<path fill="#252423" d="M1280,1200Q1335,1160 1383,1116Q1340,1170 1292,1222Z"/>
<path fill="#252423" d="M1266,1250Q1350,1195 1438,1122Q1365,1200 1284,1276Z"/></g>
</svg>
<div id="side" class="abs"><div class="abs trk" style="top:9px;height:356px"></div><div class="abs hnd" style="top:122px"></div><div class="abs" style="left:24.5px;top:432px;width:34px;height:34px;border:3.2px solid #8d8d8d;border-radius:10px"></div><div class="abs trk" style="top:540px;height:355px"></div><div class="abs hnd" style="top:539.5px"></div><svg class="abs" style="left:22.5px;top:930px" width="44" height="36" viewBox="0 0 44 36"><path d="M6,32H28A9,9 0 0 0 28,12H14" fill="none" stroke="#a5a5a5" stroke-width="3.4" stroke-linecap="round"/><path d="M16,3.5L3,11.5L16,19.5Z" fill="#a5a5a5"/></svg><svg class="abs" style="left:21px;top:1018px" width="44" height="36" viewBox="0 0 44 36"><path d="M38,32H16A9,9 0 0 1 16,12H30" fill="none" stroke="#454545" stroke-width="3.4" stroke-linecap="round"/><path d="M28,3.5L41,11.5L28,19.5Z" fill="#454545"/></svg></div>
<div id="tl" class="abs"><div class="abs play">Play</div><div class="abs set">Setti</div><div class="abs strip"></div><div class="abs ft" style="left:866px"><svg width="106" height="60" viewBox="0 0 106 60"><use href="#fig" transform="translate(14,4) scale(0.036)"/></svg></div><div class="abs ft" style="left:986px"><svg width="106" height="60" viewBox="0 0 106 60"><use href="#fig" transform="translate(8,5) scale(0.036)"/></svg></div><div class="abs ft" style="left:1106px"><svg width="106" height="60" viewBox="0 0 106 60"><use href="#fig" transform="translate(2,9) scale(0.036)"/></svg></div><div class="abs ft" style="left:1226px"><svg width="106" height="60" viewBox="0 0 106 60"><use href="#fig" transform="translate(7,5) scale(0.036)"/></svg></div><div class="abs ft" style="left:1346px"><svg width="106" height="60" viewBox="0 0 106 60"><use href="#fig" transform="translate(1,4) scale(0.036)"/></svg></div><div class="abs ft" style="left:1466px"><svg width="106" height="60" viewBox="0 0 106 60"><use href="#fig" transform="translate(4,5) scale(0.036)"/></svg></div></div>
<div id="lay" class="abs"><div class="abs ttl">Layers</div><svg class="abs" style="left:714px;top:53px" width="42" height="42" viewBox="0 0 42 42"><path d="M1,20.5H41M20.8,0.5V40.5" stroke="#dcdcdc" stroke-width="2.6" fill="none"/></svg><div class="abs" style="left:12px;top:147.5px;width:786px;height:2px;background:#2f2f2f"></div><div class="abs row" style="top:154.5px;height:172px"><div class="abs gth"><div class="abs mr" style="top:1px"><div class="abs mt"><svg width="27.5" height="16.5" viewBox="0 0 27.5 16.5"><use href="#fig" transform="translate(8.5,1.5) scale(0.0075)"/></svg></div><div class="abs ml">Layer 129</div><div class="abs mn">N</div><div class="abs mc"></div></div><div class="abs mr" style="top:27.5px"><div class="abs mt"><svg width="27.5" height="16.5" viewBox="0 0 27.5 16.5"><use href="#fig" transform="translate(8.5,1.5) scale(0.0075)"/></svg></div><div class="abs ml">Layer 127</div><div class="abs mn">N</div><div class="abs mc"></div></div></div><div class="abs nm" style="left:218px;top:64.5px">Frame 9</div><svg class="abs" style="left:640px;top:66px" width="22" height="40" viewBox="0 0 22 40"><path d="M2,2L17.5,20L2,38" fill="none" stroke="#a9a9a9" stroke-width="2.3"/></svg><div class="abs cb" style="top:70.5px"><svg width="29.5" height="29.5" viewBox="0 0 29.5 29.5"><path d="M8,15.5L12.8,20.3L22,10" fill="none" stroke="#2e2e2e" stroke-width="3.6"/></svg></div></div><div class="abs row" style="top:331.5px;height:172px"><div class="abs gth"><div class="abs mr" style="top:1px"><div class="abs mt"><svg width="27.5" height="16.5" viewBox="0 0 27.5 16.5"><use href="#fig" transform="translate(8.5,1.5) scale(0.0075)"/></svg></div><div class="abs ml">Layer 125</div><div class="abs mn">N</div><div class="abs mc"></div></div><div class="abs mr" style="top:27.5px"><div class="abs mt"><svg width="27.5" height="16.5" viewBox="0 0 27.5 16.5"><use href="#fig" transform="translate(8.5,1.5) scale(0.0075)"/></svg></div><div class="abs ml">Layer 124</div><div class="abs mn">N</div><div class="abs mc"></div></div></div><div class="abs nm" style="left:218px;top:64.5px">Frame 8</div><svg class="abs" style="left:640px;top:66px" width="22" height="40" viewBox="0 0 22 40"><path d="M2,2L17.5,20L2,38" fill="none" stroke="#a9a9a9" stroke-width="2.3"/></svg><div class="abs cb" style="top:70.5px"><svg width="29.5" height="29.5" viewBox="0 0 29.5 29.5"><path d="M8,15.5L12.8,20.3L22,10" fill="none" stroke="#2e2e2e" stroke-width="3.6"/></svg></div></div><div class="abs row" style="top:508.5px;height:172px"><div class="abs gth"><div class="abs mr" style="top:1px"><div class="abs mt"><svg width="27.5" height="16.5" viewBox="0 0 27.5 16.5"><use href="#fig" transform="translate(8.5,1.5) scale(0.0075)"/></svg></div><div class="abs ml">Layer 122</div><div class="abs mn">N</div><div class="abs mc"></div></div><div class="abs mr" style="top:27.5px"><div class="abs mt"><svg width="27.5" height="16.5" viewBox="0 0 27.5 16.5"><use href="#fig" transform="translate(8.5,1.5) scale(0.0075)"/></svg></div><div class="abs ml">Layer 118</div><div class="abs mn">N</div><div class="abs mc"></div></div><div class="abs mr" style="top:54px"><div class="abs mt"><svg width="27.5" height="16.5" viewBox="0 0 27.5 16.5"><use href="#fig" transform="translate(8.5,1.5) scale(0.0075)"/></svg></div><div class="abs ml">Layer 114</div><div class="abs mn">N</div><div class="abs mc"></div></div></div><div class="abs nm" style="left:218px;top:64.5px">Frame 7</div><svg class="abs" style="left:640px;top:66px" width="22" height="40" viewBox="0 0 22 40"><path d="M2,2L17.5,20L2,38" fill="none" stroke="#a9a9a9" stroke-width="2.3"/></svg><div class="abs cb" style="top:70.5px"><svg width="29.5" height="29.5" viewBox="0 0 29.5 29.5"><path d="M8,15.5L12.8,20.3L22,10" fill="none" stroke="#2e2e2e" stroke-width="3.6"/></svg></div></div><div class="abs row" style="top:685.5px;height:172px"><div class="abs gth"><div class="abs mr" style="top:1px"><div class="abs mt"><svg width="27.5" height="16.5" viewBox="0 0 27.5 16.5"><use href="#fig" transform="translate(8.5,1.5) scale(0.0075)"/></svg></div><div class="abs ml">Layer 109</div><div class="abs mn">N</div><div class="abs mc"></div></div><div class="abs mr" style="top:27.5px"><div class="abs mt"><svg width="27.5" height="16.5" viewBox="0 0 27.5 16.5"><use href="#fig" transform="translate(8.5,1.5) scale(0.0075)"/></svg></div><div class="abs ml">Layer 108</div><div class="abs mn">N</div><div class="abs mc"></div></div></div><div class="abs nm" style="left:218px;top:64.5px">Frame 6</div><svg class="abs" style="left:640px;top:66px" width="22" height="40" viewBox="0 0 22 40"><path d="M2,2L17.5,20L2,38" fill="none" stroke="#a9a9a9" stroke-width="2.3"/></svg><div class="abs cb" style="top:70.5px"><svg width="29.5" height="29.5" viewBox="0 0 29.5 29.5"><path d="M8,15.5L12.8,20.3L22,10" fill="none" stroke="#2e2e2e" stroke-width="3.6"/></svg></div></div><div class="abs row" style="top:862.5px;height:172px"><div class="abs gth"><div class="abs mr" style="top:1px"><div class="abs mt"><svg width="27.5" height="16.5" viewBox="0 0 27.5 16.5"><use href="#fig" transform="translate(8.5,1.5) scale(0.0075)"/></svg></div><div class="abs ml">Layer 106</div><div class="abs mn">N</div><div class="abs mc"></div></div><div class="abs mr" style="top:27.5px"><div class="abs mt"><svg width="27.5" height="16.5" viewBox="0 0 27.5 16.5"><use href="#fig" transform="translate(8.5,1.5) scale(0.0075)"/></svg></div><div class="abs ml">Layer 102</div><div class="abs mn">N</div><div class="abs mc"></div></div></div><div class="abs nm" style="left:218px;top:64.5px">Frame 5</div><svg class="abs" style="left:640px;top:66px" width="22" height="40" viewBox="0 0 22 40"><path d="M2,2L17.5,20L2,38" fill="none" stroke="#a9a9a9" stroke-width="2.3"/></svg><div class="abs cb" style="top:70.5px"><svg width="29.5" height="29.5" viewBox="0 0 29.5 29.5"><path d="M8,15.5L12.8,20.3L22,10" fill="none" stroke="#2e2e2e" stroke-width="3.6"/></svg></div></div><div class="abs row" style="top:1039.5px;height:172px"><div class="abs gth"><div class="abs mr" style="top:1px"><div class="abs mt"><svg width="27.5" height="16.5" viewBox="0 0 27.5 16.5"><use href="#fig" transform="translate(8.5,1.5) scale(0.0075)"/></svg></div><div class="abs ml">Layer 98</div><div class="abs mn">N</div><div class="abs mc"></div></div><div class="abs mr" style="top:27.5px"><div class="abs mt"><svg width="27.5" height="16.5" viewBox="0 0 27.5 16.5"><use href="#fig" transform="translate(8.5,1.5) scale(0.0075)"/></svg></div><div class="abs ml">Layer 96</div><div class="abs mn">N</div><div class="abs mc"></div></div></div><div class="abs nm" style="left:218px;top:64.5px">Frame 4</div><svg class="abs" style="left:640px;top:66px" width="22" height="40" viewBox="0 0 22 40"><path d="M2,2L17.5,20L2,38" fill="none" stroke="#a9a9a9" stroke-width="2.3"/></svg><div class="abs cb" style="top:70.5px"><svg width="29.5" height="29.5" viewBox="0 0 29.5 29.5"><path d="M8,15.5L12.8,20.3L22,10" fill="none" stroke="#2e2e2e" stroke-width="3.6"/></svg></div></div><div class="abs row" style="top:1215px;height:90.5px"><div class="abs" style="left:7.5px;top:42px;width:147.5px;height:8.5px;background:rgba(255,255,255,.105)"></div><div class="abs nm" style="left:219px;top:26.5px">Frame 3</div><svg class="abs" style="left:633px;top:34px" width="36" height="22" viewBox="0 0 36 22"><path d="M2,2.5L17.5,19L33,2.5" fill="none" stroke="#a9a9a9" stroke-width="2.3"/></svg><div class="abs cb" style="top:32px"><svg width="29.5" height="29.5" viewBox="0 0 29.5 29.5"><path d="M8,15.5L12.8,20.3L22,10" fill="none" stroke="#2e2e2e" stroke-width="3.6"/></svg></div></div><div class="abs row sel" style="top:1311.5px;height:138.5px"><div class="abs th"><svg width="147" height="121" viewBox="0 0 147 121"><use href="#smears" transform="translate(-44,-18.5) scale(0.107)"/></svg></div><div class="abs nm" style="left:251px;top:49px">Smear Lines</div><div class="abs n" style="top:55px">N</div><div class="abs cb" style="top:54.5px"><svg width="29.5" height="29.5" viewBox="0 0 29.5 29.5"><path d="M8,15.5L12.8,20.3L22,10" fill="none" stroke="#0079ff" stroke-width="3.6"/></svg></div></div><div class="abs row" style="top:1454.5px;height:138.5px"><div class="abs th"><svg width="147" height="121" viewBox="0 0 147 121"><use href="#figLines" transform="translate(-11,-12.3) scale(0.077)"/></svg></div><div class="abs nm" style="left:251px;top:49px">Lines</div><div class="abs n" style="top:55px">N</div><div class="abs cb" style="top:54.5px"><svg width="29.5" height="29.5" viewBox="0 0 29.5 29.5"><path d="M8,15.5L12.8,20.3L22,10" fill="none" stroke="#2e2e2e" stroke-width="3.6"/></svg></div></div><div class="abs row" style="top:1597.5px;height:138.5px"><div class="abs th"><svg width="147" height="121" viewBox="0 0 147 121"><use href="#fig" transform="translate(-11,-12.3) scale(0.077)"/></svg></div><div class="abs nm" style="left:251px;top:49px">Col</div><div class="abs n" style="top:55px">N</div><div class="abs cb" style="top:54.5px"><svg width="29.5" height="29.5" viewBox="0 0 29.5 29.5"><path d="M8,15.5L12.8,20.3L22,10" fill="none" stroke="#2e2e2e" stroke-width="3.6"/></svg></div></div><div class="abs row" style="top:1741.1px;height:138.5px"><div class="abs th"><svg width="147" height="121" viewBox="0 0 147 121"><rect y="17" width="147" height="88" fill="#ebebea"/><rect y="84" width="147" height="21" fill="#a9adae"/><use href="#fig" transform="translate(40,25.5) scale(0.0355)"/></svg></div><div class="abs nm" style="left:251px;top:49px">Layer 3</div><div class="abs n" style="top:55px">N</div><div class="abs cb" style="top:54.5px"><svg width="29.5" height="29.5" viewBox="0 0 29.5 29.5"><path d="M8,15.5L12.8,20.3L22,10" fill="none" stroke="#2e2e2e" stroke-width="3.6"/></svg></div></div><div class="abs row" style="top:1884px;height:172px"><div class="abs gth"></div></div></div>
<div class="abs" style="left:2661px;top:0;width:55px;height:2px;background:#303132"></div>
</body></html>
